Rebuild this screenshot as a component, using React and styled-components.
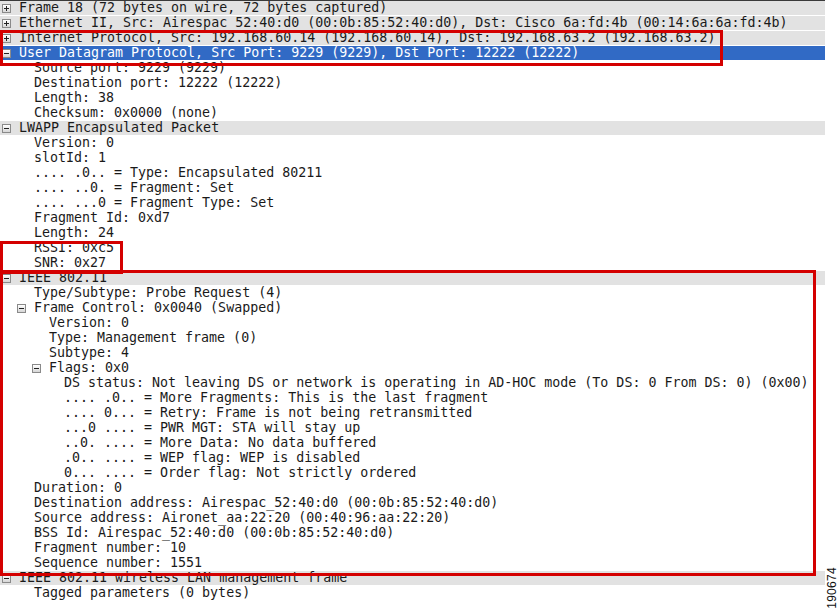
import React from "react";
import styled, { createGlobalStyle, css } from "styled-components";

const Global = createGlobalStyle`
  html, body { margin: 0; padding: 0; background: #ffffff; }
  body { width: 839px; height: 612px; overflow: hidden; }
`;

const Page = styled.div`
  display: flex;
  width: 839px;
  height: 612px;
  background: #fff;
`;

const Tree = styled.div`
  position: relative;
  width: 825px;
  border-top: 1px solid #3a3a3a;
  display: flex;
  flex-direction: column;
  font-family: "DejaVu Sans Mono", "Liberation Mono", monospace;
  font-size: 13.3px;
  color: #1a1a1a;
`;

const Row = styled.div`
  position: relative;
  height: 15px;
  display: flex;
  align-items: center;
  padding-left: ${(p) => 19 + p.$level * 15}px;
  white-space: pre;
  line-height: 15px;
  ${(p) =>
    p.$header &&
    css`
      background: linear-gradient(#e2e2e2, #e2e2e2) 0 0 / 100% 14px no-repeat;
    `}
  ${(p) =>
    p.$selected &&
    css`
      background: linear-gradient(#316ac5, #316ac5) 0 0 / 100% 14px no-repeat;
      color: #fff;
    `}
`;

const Label = styled.span`
  position: relative;
  z-index: 1;
  top: -1px;
`;

const Expander = styled.span`
  position: absolute;
  left: ${(p) => 2 + p.$level * 15}px;
  top: 3px;
  width: 7px;
  height: 7px;
  border: 1px solid #8a8a8a;
  background: linear-gradient(#ffffff, #d6d6d6);
  &::before {
    content: "";
    position: absolute;
    left: 1px;
    top: 3px;
    width: 5px;
    height: 1px;
    background: #222;
  }
  ${(p) =>
    !p.$open &&
    css`
      &::after {
        content: "";
        position: absolute;
        left: 3px;
        top: 1px;
        width: 1px;
        height: 5px;
        background: #222;
      }
    `}
`;

const RedBox = styled.div`
  position: absolute;
  z-index: 2;
  box-sizing: border-box;
  border: 3px solid #d40000;
  pointer-events: none;
`;

const Side = styled.div`
  flex: 1;
  display: flex;
  flex-direction: column;
  justify-content: flex-end;
  align-items: center;
  padding-bottom: 3px;
`;

const FigNum = styled.div`
  writing-mode: vertical-rl;
  transform: rotate(180deg);
  font-family: "Liberation Sans", Arial, sans-serif;
  font-size: 12px;
  color: #111;
  letter-spacing: 0.3px;
`;

const rows = [
  { l: 0, h: true, e: "c", t: "Frame 18 (72 bytes on wire, 72 bytes captured)" },
  { l: 0, h: true, e: "c", t: "Ethernet II, Src: Airespac_52:40:d0 (00:0b:85:52:40:d0), Dst: Cisco_6a:fd:4b (00:14:6a:6a:fd:4b)" },
  { l: 0, h: true, e: "c", t: "Internet Protocol, Src: 192.168.60.14 (192.168.60.14), Dst: 192.168.63.2 (192.168.63.2)" },
  { l: 0, s: true, e: "o", t: "User Datagram Protocol, Src Port: 9229 (9229), Dst Port: 12222 (12222)" },
  { l: 1, t: "Source port: 9229 (9229)" },
  { l: 1, t: "Destination port: 12222 (12222)" },
  { l: 1, t: "Length: 38" },
  { l: 1, t: "Checksum: 0x0000 (none)" },
  { l: 0, h: true, e: "o", t: "LWAPP Encapsulated Packet" },
  { l: 1, t: "Version: 0" },
  { l: 1, t: "slotId: 1" },
  { l: 1, t: ".... .0.. = Type: Encapsulated 80211" },
  { l: 1, t: ".... ..0. = Fragment: Set" },
  { l: 1, t: ".... ...0 = Fragment Type: Set" },
  { l: 1, t: "Fragment Id: 0xd7" },
  { l: 1, t: "Length: 24" },
  { l: 1, t: "RSSI: 0xc5" },
  { l: 1, t: "SNR: 0x27" },
  { l: 0, h: true, e: "o", t: "IEEE 802.11" },
  { l: 1, t: "Type/Subtype: Probe Request (4)" },
  { l: 1, e: "o", t: "Frame Control: 0x0040 (Swapped)" },
  { l: 2, t: "Version: 0" },
  { l: 2, t: "Type: Management frame (0)" },
  { l: 2, t: "Subtype: 4" },
  { l: 2, e: "o", t: "Flags: 0x0" },
  { l: 3, t: "DS status: Not leaving DS or network is operating in AD-HOC mode (To DS: 0 From DS: 0) (0x00)" },
  { l: 3, t: ".... .0.. = More Fragments: This is the last fragment" },
  { l: 3, t: ".... 0... = Retry: Frame is not being retransmitted" },
  { l: 3, t: "...0 .... = PWR MGT: STA will stay up" },
  { l: 3, t: "..0. .... = More Data: No data buffered" },
  { l: 3, t: ".0.. .... = WEP flag: WEP is disabled" },
  { l: 3, t: "0... .... = Order flag: Not strictly ordered" },
  { l: 1, t: "Duration: 0" },
  { l: 1, t: "Destination address: Airespac_52:40:d0 (00:0b:85:52:40:d0)" },
  { l: 1, t: "Source address: Aironet_aa:22:20 (00:40:96:aa:22:20)" },
  { l: 1, t: "BSS Id: Airespac_52:40:d0 (00:0b:85:52:40:d0)" },
  { l: 1, t: "Fragment number: 10" },
  { l: 1, t: "Sequence number: 1551" },
  { l: 0, h: true, e: "o", t: "IEEE 802.11 wireless LAN management frame" },
  { l: 1, t: "Tagged parameters (0 bytes)" },
];

// Red annotation boxes, positioned relative to the tree's top edge (below its 1px border)
const boxes = [
  { x: 0, y: 29, w: 723, h: 36 },
  { x: 0, y: 240, w: 123, h: 33 },
  { x: 0, y: 269, w: 816, h: 306 },
];

export default function App() {
  return (
    <>
      <Global />
      <Page>
        <Tree>
          {rows.map((r, i) => (
            <Row key={i} $level={r.l} $header={r.h} $selected={r.s}>
              {r.e && <Expander $level={r.l} $open={r.e === "o"} />}
              <Label>{r.t}</Label>
            </Row>
          ))}
          {boxes.map((b, i) => (
            <RedBox
              key={i}
              style={{ left: b.x, top: b.y, width: b.w, height: b.h }}
            />
          ))}
        </Tree>
        <Side>
          <FigNum>190674</FigNum>
        </Side>
      </Page>
    </>
  );
}
